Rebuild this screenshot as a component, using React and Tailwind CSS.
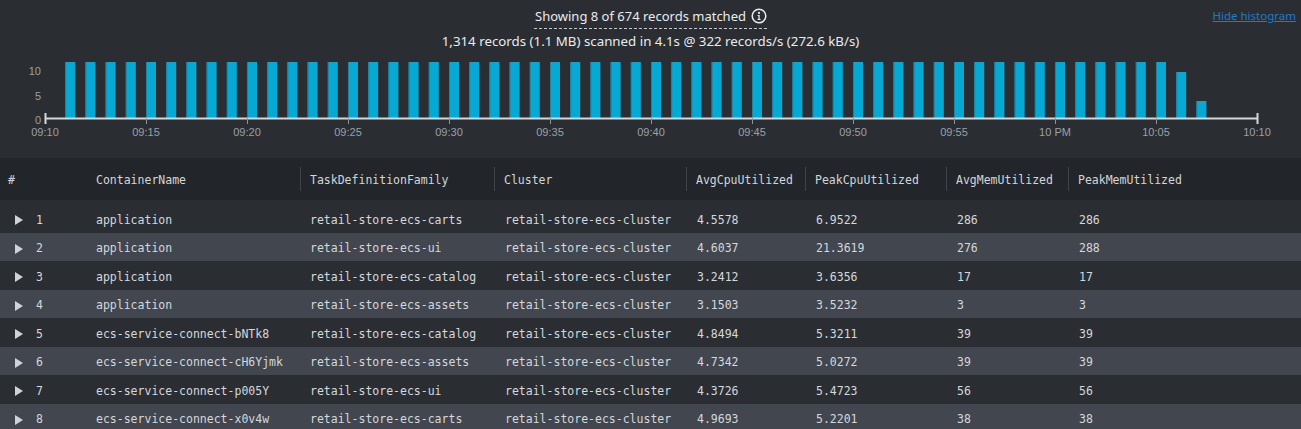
import React from 'react'

const ROWS = [
  ['application', 'retail-store-ecs-carts', 'retail-store-ecs-cluster', '4.5578', '6.9522', '286', '286'],
  ['application', 'retail-store-ecs-ui', 'retail-store-ecs-cluster', '4.6037', '21.3619', '276', '288'],
  ['application', 'retail-store-ecs-catalog', 'retail-store-ecs-cluster', '3.2412', '3.6356', '17', '17'],
  ['application', 'retail-store-ecs-assets', 'retail-store-ecs-cluster', '3.1503', '3.5232', '3', '3'],
  ['ecs-service-connect-bNTk8', 'retail-store-ecs-catalog', 'retail-store-ecs-cluster', '4.8494', '5.3211', '39', '39'],
  ['ecs-service-connect-cH6Yjmk', 'retail-store-ecs-assets', 'retail-store-ecs-cluster', '4.7342', '5.0272', '39', '39'],
  ['ecs-service-connect-p005Y', 'retail-store-ecs-ui', 'retail-store-ecs-cluster', '4.3726', '5.4723', '56', '56'],
  ['ecs-service-connect-x0v4w', 'retail-store-ecs-carts', 'retail-store-ecs-cluster', '4.9693', '5.2201', '38', '38'],
]

const HEADERS = ['ContainerName', 'TaskDefinitionFamily', 'Cluster', 'AvgCpuUtilized', 'PeakCpuUtilized', 'AvgMemUtilized', 'PeakMemUtilized']

const TICKS = ['09:10', '09:15', '09:20', '09:25', '09:30', '09:35', '09:40', '09:45', '09:50', '09:55', '10 PM', '10:05', '10:10']

// bar heights in px, one per minute from 09:11
const BARS = Array.from({ length: 57 }, (_, i) => (i === 55 ? 46 : i === 56 ? 17 : 56))

const X0 = 45
const MIN = 20.2
const BASE = 118

function Histogram() {
  return (
    <svg width="1301" height="103" viewBox="0 55 1301 103" className="block">
      {BARS.map((h, i) => {
        const x = X0 + MIN * (i + 1)
        return (
          <g key={i}>
            <rect x={x} y={BASE - h} width="10" height={h} fill="#06a9d3" />
            <rect x={x} y={BASE - h} width="1" height={h} fill="#2a7f98" />
          </g>
        )
      })}
      <line x1={X0} y1={BASE + 0.5} x2={1258} y2={BASE + 0.5} stroke="#d6d7d8" strokeWidth="2" />
      {TICKS.map((t, k) => {
        const x = X0 + 101 * k
        const end = k === 0 || k === 12
        return (
          <g key={t}>
            <line x1={x + 0.5} y1={end ? 113 : BASE} x2={x + 0.5} y2={124} stroke={end ? '#d6d7d8' : '#8f949a'} strokeWidth={end ? 2 : 1} />
            <text x={x} y={136} textAnchor="middle" fontSize="11" fill="#9ba0a6" fontFamily="Liberation Sans, Arial, sans-serif">{t}</text>
          </g>
        )
      })}
      {[['10', 75], ['5', 100], ['0', 124]].map(([v, y]) => (
        <text key={v} x={41} y={y} textAnchor="end" fontSize="11" fill="#9ba0a6" fontFamily="Liberation Sans, Arial, sans-serif">{v}</text>
      ))}
    </svg>
  )
}

function Caret() {
  return (
    <svg width="8" height="10" viewBox="0 0 8 10" className="block">
      <path d="M0 0 L8 5 L0 10 Z" fill="#cfd3d7" />
    </svg>
  )
}

const COLS = 'grid grid-cols-[86px_214px_194px_192px_119px_141px_122px_1fr]'

export default function App() {
  return (
    <div className="w-[1301px] h-[429px] overflow-hidden bg-[#2a2e33] text-[#d5d8dc]">
      {/* summary + histogram */}
      <div className="h-[158px] flex flex-col">
        <div className="grid grid-cols-[1fr_auto_1fr] pt-[6px] font-['Noto_Sans',sans-serif]">
          <div />
          <div className="flex flex-col items-center">
            <div className="flex items-center gap-[5px] text-[13px] leading-[20px] text-[#e9ebed] border-b border-dashed border-[#c6c9cc] pb-[2px] pl-[1px]">
              <span>Showing 8 of 674 records matched</span>
              <svg width="16" height="16" viewBox="0 0 16 16">
                <circle cx="8" cy="8" r="6.8" fill="none" stroke="#e9ebed" strokeWidth="1.5" />
                <circle cx="8" cy="4.9" r="1.1" fill="#e9ebed" />
                <path d="M6.6 7 H8.7 V11 H9.6 V12 H6.5 V11 H7.4 V8 H6.6 Z" fill="#e9ebed" />
              </svg>
            </div>
            <div className="text-[13.3px] leading-[20px] mt-[2px] text-[#e9ebed]">
              1,314 records (1.1 MB) scanned in 4.1s @ 322 records/s (272.6 kB/s)
            </div>
          </div>
          <div className="flex justify-end pr-[5px] pt-[1px]">
            <a className="text-[11.5px] leading-[18px] text-[#1b7bcf] underline">Hide histogram</a>
          </div>
        </div>
        <div className="mt-auto">
          <Histogram />
        </div>
      </div>

      {/* results table */}
      <div className="font-['DejaVu_Sans_Mono',monospace] text-[11.5px]">
        <div className={`${COLS} h-[42px] items-center bg-[#22262b] text-[#d3d6da]`}>
          <div className="pl-2 pt-[3px]">#</div>
          {HEADERS.map((h, i) => (
            <div key={h} className="flex items-center h-full">
              {i > 0 && <span className="w-px h-[24px] bg-[#40454c]" />}
              <span className={`pt-[3px] ${i > 0 ? 'pl-[9px]' : 'pl-[10px]'}`}>{h}</span>
            </div>
          ))}
        </div>
        <div className="pt-1">
          {ROWS.map((r, i) => (
            <div key={i} className={`${COLS} h-[28.5px] pt-[4px] items-center ${i % 2 ? 'bg-[#41464f]' : 'bg-[#2a2e33]'}`}>
              <div className="flex items-center pl-[15px] gap-[13px]">
                <Caret />
                <span>{i + 1}</span>
              </div>
              {r.map((c, j) => (
                <div key={j} className={j >= 2 ? 'pl-[11px]' : 'pl-[10px]'}>{c}</div>
              ))}
            </div>
          ))}
        </div>
      </div>
    </div>
  )
}
